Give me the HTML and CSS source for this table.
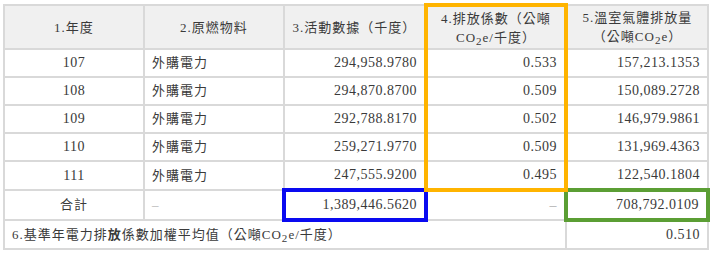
FILE: index.html
```html
<!DOCTYPE html>
<html lang="zh-Hant">
<head>
<meta charset="utf-8">
<title>外購電力排放係數</title>
<link rel="stylesheet" href="styles.css">
</head>
<body>
<div class="page">
<table class="emis">
  <colgroup>
    <col class="w140"><col class="w140"><col class="w142"><col class="w140"><col class="w142">
  </colgroup>
  <thead>
    <tr>
      <th>1.年度</th>
      <th>2.原燃物料</th>
      <th>3.活動數據（千度）</th>
      <th class="o ot">4.排放係數（公噸<br>CO<sub>2</sub>e/千度）</th>
      <th>5.溫室氣體排放量<br>（公噸CO<sub>2</sub>e）</th>
    </tr>
  </thead>
  <tbody>
    <tr><td class="ctr">107</td><td class="lft">外購電力</td><td class="num">294,958.9780</td><td class="num o">0.533</td><td class="num">157,213.1353</td></tr>
    <tr><td class="ctr">108</td><td class="lft">外購電力</td><td class="num">294,870.8700</td><td class="num o">0.509</td><td class="num">150,089.2728</td></tr>
    <tr><td class="ctr">109</td><td class="lft">外購電力</td><td class="num">292,788.8170</td><td class="num o">0.502</td><td class="num">146,979.9861</td></tr>
    <tr><td class="ctr">110</td><td class="lft">外購電力</td><td class="num">259,271.9770</td><td class="num o">0.509</td><td class="num">131,969.4363</td></tr>
    <tr><td class="ctr">111</td><td class="lft">外購電力</td><td class="num">247,555.9200</td><td class="num o ob">0.495</td><td class="num">122,540.1804</td></tr>
    <tr class="total"><td class="ctr cjk">合計</td><td class="lft dash">–</td><td class="num blue">1,389,446.5620</td><td class="num dash">–</td><td class="num green">708,792.0109</td></tr>
    <tr class="avg"><td class="lft" colspan="4">6.基準年電力排<span class="bold">放</span>係數加權平均值（公噸CO<sub>2</sub>e/千度）</td><td class="num">0.510</td></tr>
  </tbody>
</table>
</div>
</body>
</html>
```

FILE: styles.css
```css
html, body {
  margin: 0;
  padding: 0;
  background: #ffffff;
}

.page {
  padding: 3px 0 0 3px;
}

.emis {
  border-collapse: collapse;
  table-layout: fixed;
  width: 704px;
  font-family: "Liberation Serif", "Noto Sans CJK TC", serif;
  font-size: 13px;
  letter-spacing: 1px;
  color: #3a3a3a;
}

.w140 { width: 140px; }
.w142 { width: 142px; }

.emis th,
.emis td {
  border: 2px solid #d9d9d9;
  padding: 0 7px;
  white-space: nowrap;
  overflow: hidden;
}

.emis th {
  background: #f0f0f0;
  font-weight: normal;
  text-align: center;
  height: 41px;
  line-height: 19px;
}

.emis td {
  height: 26px;
  line-height: 18px;
}

.ctr {
  text-align: center;
  font-size: 14px;
  letter-spacing: 0.5px;
}
.ctr.cjk {
  font-size: 13px;
  letter-spacing: 1px;
}
.lft { text-align: left; }
.num {
  text-align: right;
  font-size: 14px;
  letter-spacing: 0.5px;
}

.dash { color: #b0b0b0; }

sub {
  font-size: 0.85em;
  vertical-align: -0.25em;
  line-height: 0;
}

.bold { font-weight: 700; }

.emis .o {
  border-left: 4px solid #ffb400;
  border-right: 4px solid #ffb400;
}
.emis .ot { border-top: 4px solid #ffb400; }
.emis .ob { border-bottom: 4px solid #ffb400; }

.emis .blue { border: 4px solid #0a0af0; }
.emis .green { border: 4px solid #5b9e34; }
```
